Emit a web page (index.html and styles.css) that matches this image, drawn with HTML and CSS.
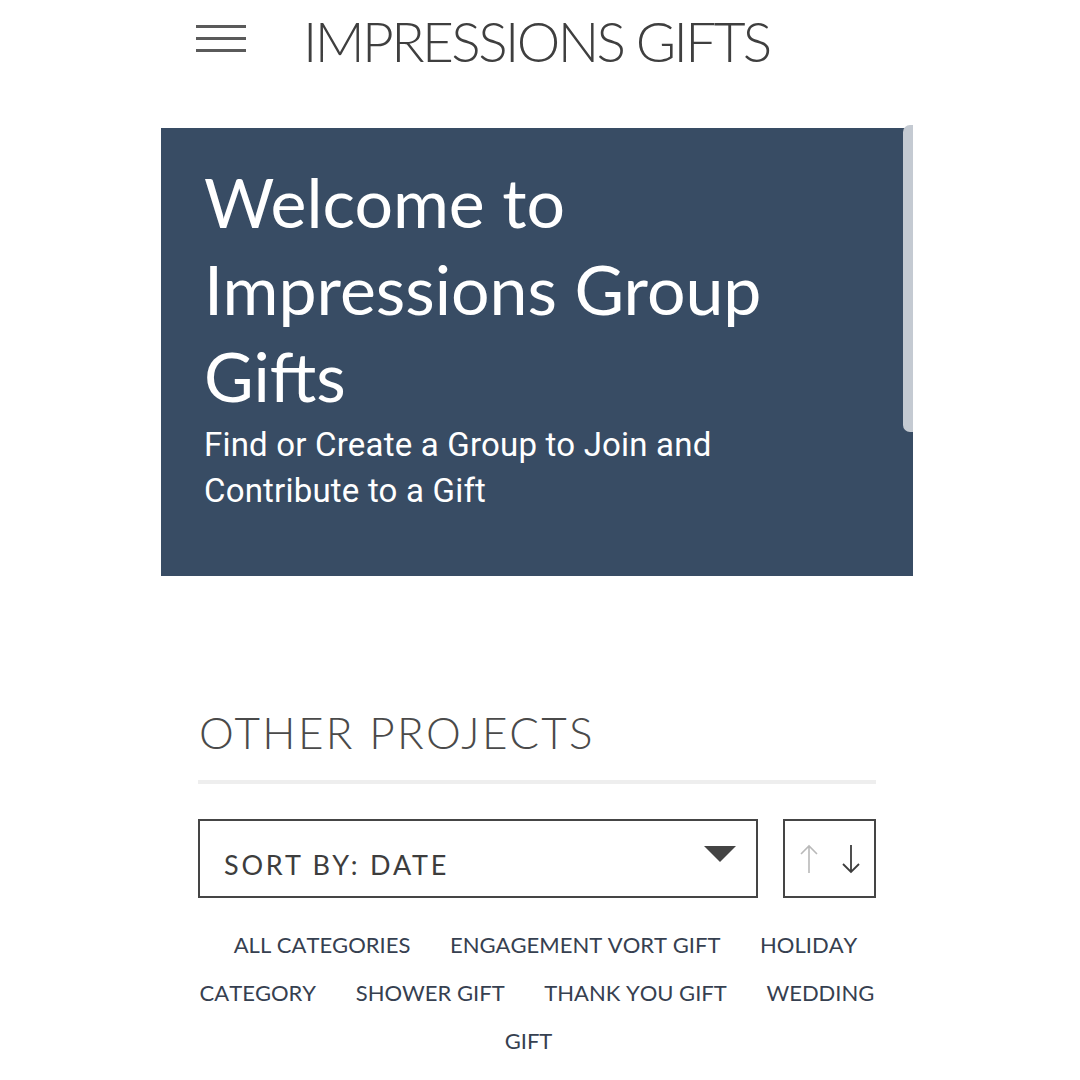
FILE: index.html
```html
<!DOCTYPE html>
<html>
<head>
<meta charset="utf-8">
<link rel="stylesheet" href="styles.css">
</head>
<body>
<div class="page">
  <header class="topbar">
    <div class="burger"><span></span><span></span><span></span></div>
    <div class="brand">IMPRESSIONS GIFTS</div>
  </header>
  <section class="hero">
    <h1 class="hero-title">Welcome to Impressions Group Gifts</h1>
    <p class="hero-sub">Find or Create a Group to Join and Contribute to a Gift</p>
    <div class="scroll-thumb"></div>
  </section>
  <section class="projects">
    <h2 class="projects-title">OTHER PROJECTS</h2>
    <div class="rule"></div>
    <div class="controls">
      <div class="select">
        <span class="select-label">SORT BY: DATE</span>
        <span class="caret"></span>
      </div>
      <div class="order">
        <svg width="22" height="32" viewBox="0 0 22 32" class="arr up"><path d="M11 30V3M3 11l8-8 8 8" fill="none" stroke="currentColor" stroke-width="1.6"/></svg>
        <svg width="22" height="32" viewBox="0 0 22 32" class="arr down"><path d="M11 2v27M3 21l8 8 8-8" fill="none" stroke="currentColor" stroke-width="1.8"/></svg>
      </div>
    </div>
    <div class="cats">
      <span class="cat">ALL CATEGORIES</span>
      <span class="cat">ENGAGEMENT VORT GIFT</span>
      <span class="cat"><span>HOLIDAY</span> <span>CATEGORY</span></span>
      <span class="cat">SHOWER GIFT</span>
      <span class="cat">THANK YOU GIFT</span>
      <span class="cat"><span>WEDDING</span> <span>GIFT</span></span>
    </div>
  </section>
</div>
</body>
</html>
```

FILE: styles.css
```css
html, body { margin: 0; padding: 0; background: #fff; }
body { font-family: "Lato", "Liberation Sans", sans-serif; color: #444; }

.page { width: 752px; margin-left: 161px; }

.topbar { display: flex; align-items: flex-start; height: 88px; padding-left: 35px; box-sizing: border-box; }
.burger { display: flex; flex-direction: column; gap: 9px; width: 50px; margin-top: 25px; }
.burger span { display: block; height: 3px; background: #5a5a5a; }
.brand { margin-left: 57px; margin-top: 14px; font-size: 55px; font-weight: 300; color: #3f3f3f; letter-spacing: -2.6px; line-height: 55px; }

.hero { position: relative; margin-top: 40px; height: 448px; background: #384c64; padding: 30px 40px 0 43px; box-sizing: border-box; color: #fff; }
.hero-title { margin: 0; font-weight: 400; font-size: 68px; line-height: 87px; width: 620px; }
.hero-sub { margin: 3px 0 0; font-family: "Roboto", sans-serif; font-size: 33px; line-height: 46px; width: 560px; letter-spacing: 0.2px; }
.scroll-thumb { position: absolute; right: 0; top: -3px; width: 10px; height: 307px; background: #c4cad2; border-radius: 7px 0 0 7px; }

.projects { margin-left: 37px; width: 678px; margin-top: 128px; }
.projects-title { margin: 0 0 0 1px; font-weight: 300; font-size: 44px; letter-spacing: 2.4px; color: #4a4a4a; line-height: 56px; }
.rule { height: 4px; background: #eeeeee; margin-top: 20px; }
.controls { display: flex; gap: 25px; margin-top: 35px; height: 79px; }
.select { flex: 1; border: 2px solid #454545; display: flex; align-items: center; justify-content: space-between; padding: 12px 20px 0 24px; }
.select-label { font-size: 27px; letter-spacing: 2.8px; color: #3d3d3d; }
.caret { width: 0; height: 0; border-left: 16px solid transparent; border-right: 16px solid transparent; border-top: 16px solid #444; margin-top: -22px; }
.order { width: 89px; border: 2px solid #454545; display: flex; align-items: center; justify-content: center; gap: 20px; }
.arr.up { color: #b9b9b9; }
.arr.down { color: #3d3d3d; }

.cats { margin-top: 23px; text-align: center; font-size: 22px; line-height: 48px; color: #364050; font-kerning: none; }
.cat { margin: 0 17px; }
```
